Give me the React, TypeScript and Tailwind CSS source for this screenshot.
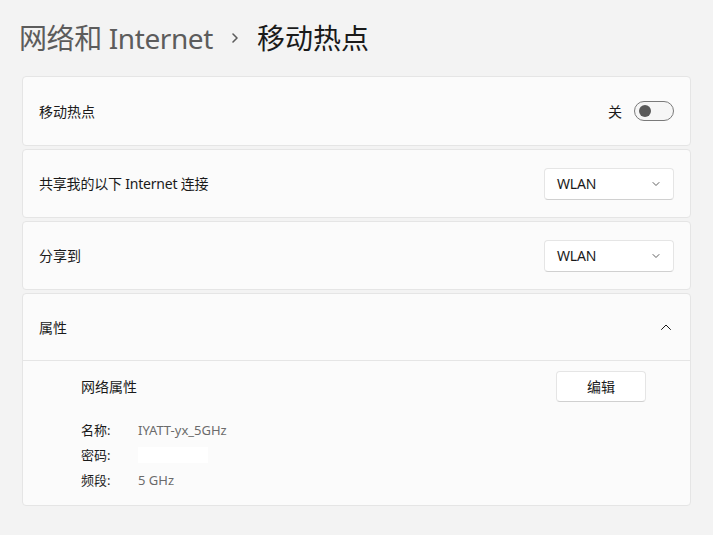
import React from "react";

const font = { fontFamily: '"Noto Sans", "Noto Sans CJK SC", sans-serif' };

function Chevron({ up = false }: { up?: boolean }) {
  return (
    <svg width="12" height="12" viewBox="0 0 12 12" fill="none" stroke="#1a1a1a" strokeWidth="1" strokeLinecap="round" strokeLinejoin="round">
      {up ? <path d="M1.5 8.5 L6 4 L10.5 8.5" /> : <path d="M2.5 4.5 L6 8 L9.5 4.5" />}
    </svg>
  );
}

function Dropdown({ value }: { value: string }) {
  return (
    <div className="flex h-[32px] w-[130px] items-center justify-between rounded-[4px] border border-[#e5e5e5] border-b-[#d0d0d0] bg-white pl-[12px] pr-[12px] text-[14px] text-[#1a1a1a]">
      <span className="tracking-[-0.2px]">{value}</span>
      <svg width="10" height="10" viewBox="0 0 10 10" fill="none" stroke="#5f5f5f" strokeWidth="1" strokeLinecap="round">
        <path d="M2 3.5 L5 6.5 L8 3.5" />
      </svg>
    </div>
  );
}

function Card({ children, tall = false }: { children: React.ReactNode; tall?: boolean }) {
  return (
    <div
      className={
        (tall ? "h-[70px] " : "h-[69px] ") +
        "flex items-center justify-between rounded-[4px] border border-[#e5e5e5] bg-[#fbfbfb] pl-[16px] pr-[16px] text-[14px] text-[#1a1a1a]"
      }
    >
      {children}
    </div>
  );
}

export default function App() {
  return (
    <div className="h-[535px] w-[713px] overflow-hidden bg-[#f3f3f3]" style={font}>
      <div className="flex h-[76px] items-center pb-[1px] pl-[19px] text-[28px]">
        <span className="text-[#5c5c5c] tracking-[-0.4px]">网络和 Internet</span>
        <span className="ml-[16px] mr-[16px] flex items-center">
          <svg width="12" height="14" viewBox="0 0 12 14" fill="none" stroke="#5c5c5c" strokeWidth="1.6" strokeLinecap="round" strokeLinejoin="round">
            <path d="M4 3 L8 7 L4 11" />
          </svg>
        </span>
        <span className="text-[#1a1a1a]">移动热点</span>
      </div>

      <div className="flex flex-col gap-[3px] pl-[22px] pr-[22px]">
        <Card tall>
          <span>移动热点</span>
          <div className="flex items-center gap-[12px]">
            <span>关</span>
            <div className="flex h-[20px] w-[40px] items-center rounded-full border border-[#7a7a7a] bg-[#f6f6f6] pl-[4px]">
              <div className="h-[12px] w-[12px] rounded-full bg-[#5a5a5a]" />
            </div>
          </div>
        </Card>
        <Card>
          <span className="tracking-[-0.2px]">共享我的以下 Internet 连接</span>
          <Dropdown value="WLAN" />
        </Card>
        <Card>
          <span>分享到</span>
          <Dropdown value="WLAN" />
        </Card>

        <div className="rounded-[4px] border border-[#e5e5e5] bg-[#fbfbfb] text-[14px] text-[#1a1a1a]">
          <div className="flex h-[67px] items-center justify-between border-b border-[#e5e5e5] pl-[16px] pr-[18px]">
            <span>属性</span>
            <Chevron up />
          </div>
          <div className="pb-[15px] pl-[58px] pr-[44px] pt-[10px]">
            <div className="flex items-center justify-between">
              <span>网络属性</span>
              <div className="flex h-[31px] w-[90px] items-center justify-center rounded-[4px] border border-[#e5e5e5] border-b-[#d0d0d0] bg-white">
                编辑
              </div>
            </div>
            <div className="mt-[18px] grid grid-cols-[57px_1fr] gap-y-[5px] text-[13px] leading-[20px]">
              <span>名称:</span>
              <span className="text-[#6b6b6b]">IYATT-yx_5GHz</span>
              <span>密码:</span>
              <span className="flex items-center">
                <span className="h-[16px] w-[70px] bg-white" />
              </span>
              <span>频段:</span>
              <span className="text-[#6b6b6b]">5 GHz</span>
            </div>
          </div>
        </div>
      </div>
    </div>
  );
}
